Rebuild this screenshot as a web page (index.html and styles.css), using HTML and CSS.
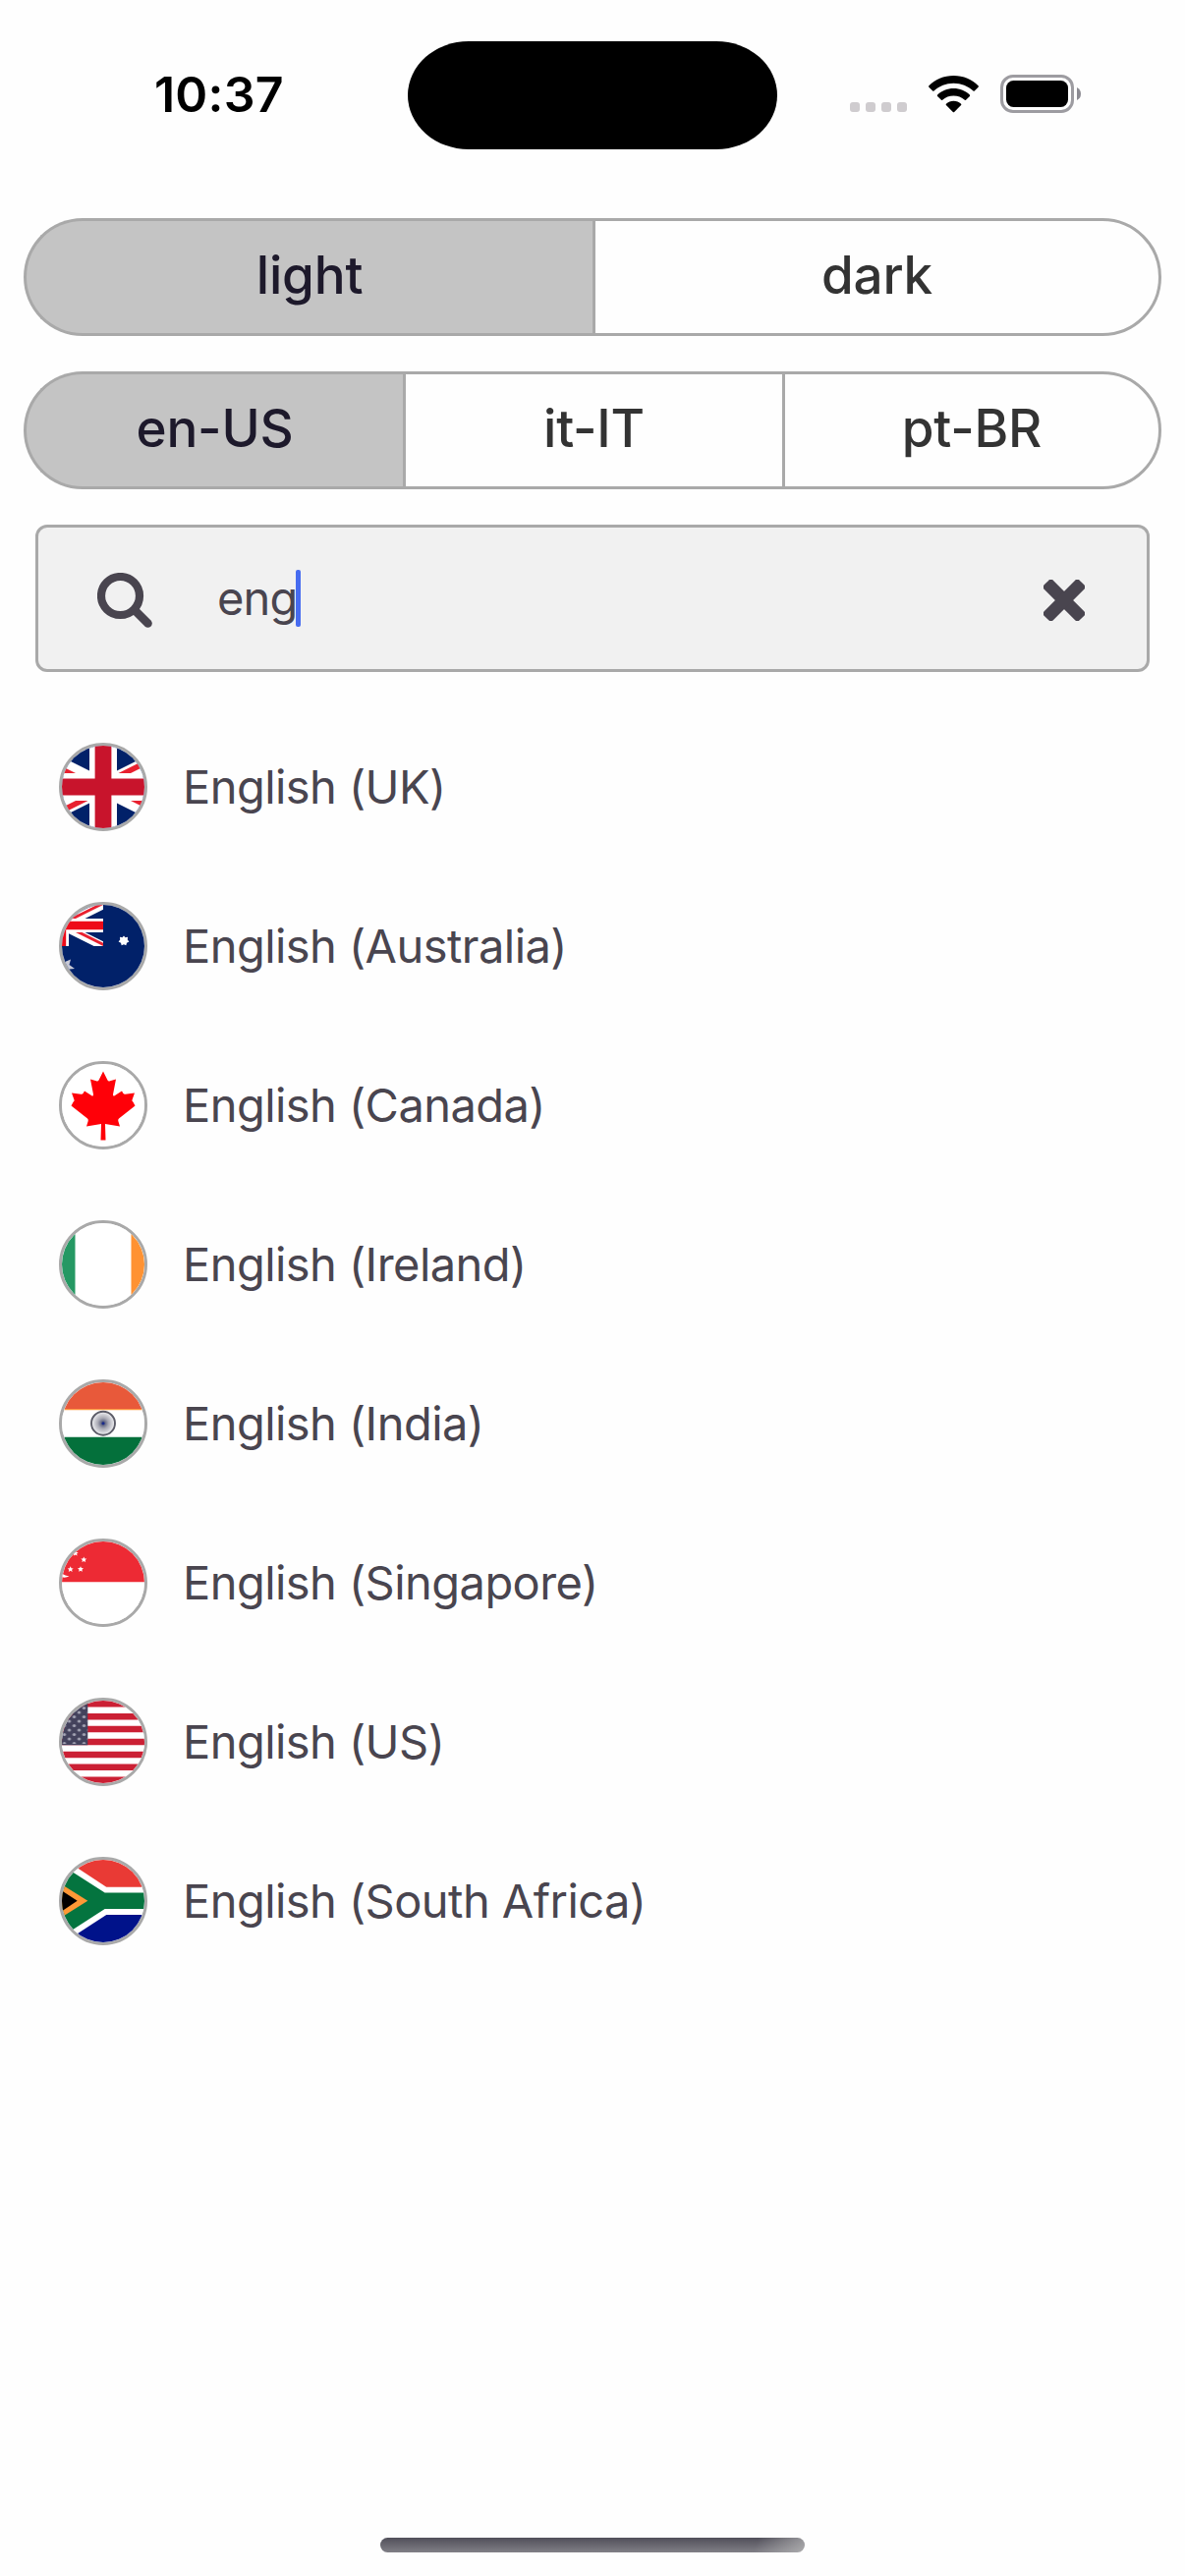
FILE: index.html
```html
<!DOCTYPE html>
<html lang="en">
<head>
<meta charset="utf-8">
<title>Language picker</title>
<link rel="stylesheet" href="styles.css">
</head>
<body>
<div class="screen">
  <header class="status-bar">
    <div class="time">10:37</div>
    <div class="island"></div>
    <div class="indicators">
      <div class="signal"><i></i><i></i><i></i><i></i></div>
      <svg class="wifi" viewBox="0 0 51 38" width="51" height="38">
        <path d="M25.5 0C35.500 0 44.500 4 50.600 10.300Q51.200 11 50.600 11.700L46.800 15.500Q46.200 16 45.500 15.500C40.200 10.500 33.200 7.700 25.500 7.700S10.800 10.500 5.500 15.500Q4.800 16 4.200 15.500L.4 11.700Q-.2 11 .4 10.300C6.500 4 15.500 0 25.500 0Z"/>
        <path d="M25.500 13C31.900 13 37.700 15.500 41.900 19.500Q42.500 20.200 41.900 20.900L38 24.800Q37.400 25.300 36.800 24.800C33.800 22.100 29.900 20.600 25.500 20.600S17.200 22.100 14.200 24.800Q13.600 25.300 13 24.800L9.100 20.900Q8.500 20.200 9.100 19.500C13.300 15.500 19.100 13 25.500 13Z"/>
        <path d="M25.500 25.800C28.400 25.800 31.100 26.900 33.100 28.700Q33.600 29.400 33.100 30L26.200 37Q25.500 37.700 24.800 37L17.900 30Q17.400 29.400 17.900 28.700C19.900 26.900 22.600 25.800 25.500 25.800Z"/>
      </svg>
      <svg class="battery" viewBox="0 0 82 39" width="82" height="39">
        <rect x="1.500" y="1.500" width="72" height="36" rx="11.500" fill="none" stroke="#9d9ca1" stroke-width="3"/>
        <rect x="6" y="6" width="63" height="27" rx="7.500"/>
        <path d="M78 13Q82 15 82 19.500T78 26Z" fill="#8c8b92"/>
      </svg>
    </div>
  </header>

  <main class="content">
    <div class="segmented">
      <button class="segment active">light</button>
      <button class="segment">dark</button>
    </div>
    <div class="segmented">
      <button class="segment active">en-US</button>
      <button class="segment">it-IT</button>
      <button class="segment">pt-BR</button>
    </div>

    <div class="search">
      <svg class="search-icon" viewBox="0 0 56 56" width="56" height="56" fill="none" stroke="#49454f">
        <circle cx="23.500" cy="23.500" r="19.500" stroke-width="8.200"/>
        <path d="M38.500 38.500L51.500 51.500" stroke-width="8.600" stroke-linecap="round"/>
      </svg>
      <div class="query"><span>eng</span><i class="caret"></i></div>
      <svg class="clear-icon" viewBox="0 0 42 42" width="42" height="42" fill="#49454f">
        <rect x="-4.500" y="14.500" width="51" height="13" rx="3.200" transform="rotate(45 21 21)"/>
        <rect x="-4.500" y="14.500" width="51" height="13" rx="3.200" transform="rotate(-45 21 21)"/>
      </svg>
    </div>

    <ul class="languages">
      <li><span class="flag"><svg viewBox="3 3 84 84">
        <defs>
          <clipPath id="uj-box"><path d="M0 0H60V30H0Z"/></clipPath>
          <clipPath id="uj-diag"><path d="M30 15H60V30ZV30H0ZH0V0ZV0H60Z"/></clipPath>
          <g id="jack-diagonals" clip-path="url(#uj-box)">
            <path d="M0 0L60 30M60 0L0 30" stroke="#fff" stroke-width="6"/>
            <path d="M0 0L60 30M60 0L0 30" stroke="#e8202f" stroke-width="4" clip-path="url(#uj-diag)"/>
            <path d="M30 0V30M0 15H60" stroke="#fff" stroke-width="10"/>
          </g>
        </defs>
        <path fill="#012169" d="M0 0H90V90H0Z"/>
        <g transform="translate(-39 3) scale(2.8)">
          <use href="#jack-diagonals"/>
          <path d="M30 0V30M0 15H60" stroke="#c8142c" stroke-width="6"/>
        </g></svg></span><span class="name">English (UK)</span></li>

      <li><span class="flag"><svg viewBox="3 3 84 84">
        <path fill="#012169" d="M0 0H90V90H0Z"/>
        <g transform="translate(-39 3) scale(1.4)">
          <use href="#jack-diagonals"/>
          <path d="M30 0V30M0 15H60" stroke="#ee0a18" stroke-width="6"/>
        </g>
        <path fill="#fff" d="M66 34.500l1.500 1.800 2.500-.6-.2 2.800 1.600 2-2.400 1.200-.7 2.600-2.300-1-2.300 1-.7-2.600-2.400-1.200 1.600-2-.2-2.800 2.500.6z"/>
        <path fill="#c9cad6" d="M3 54L6 61 12 58.500 10.500 64 16 68 10.500 68.500 12 74 6 72 3 78Z"/>
      </svg></span><span class="name">English (Australia)</span></li>

      <li><span class="flag"><svg viewBox="3 3 84 84">
        <path fill="#fff" d="M0 0H90V90H0Z"/>
        <path fill="#ff0008" d="M45 10.500L49.500 19.500Q50.300 21 52 20.300L58 18.500 55 34Q55 36.500 57 35L64 30.500 65.500 33Q66 34 67.500 33.800L77 32.500 74.500 39.500Q74 41 75.500 41.800L77.500 45.500 61 58.500Q59.800 59.500 60.300 61L62 66.500 47 64 47.500 80.500H42.500L43 64 28 66.500 29.700 61Q30.200 59.500 29 58.500L12.500 45.500 14.500 41.800Q16 41 15.500 39.500L13 32.500 22.500 33.800Q24 34 24.500 33L26 30.500 33 35Q35 36.500 35 34L32 18.500 38 20.300Q39.700 21 40.500 19.500Z"/>
      </svg></span><span class="name">English (Canada)</span></li>

      <li><span class="flag"><svg viewBox="3 3 84 84">
        <path fill="#fff" d="M0 0H90V90H0Z"/>
        <path fill="#259863" d="M0 0H16.500V90H0Z"/>
        <path fill="#ff9232" d="M73.500 0H90V90H73.500Z"/>
      </svg></span><span class="name">English (Ireland)</span></li>

      <li><span class="flag"><svg viewBox="3 3 84 84">
        <defs><radialGradient id="chakra"><stop offset="0" stop-color="#3d4468"/><stop offset=".45" stop-color="#a9a9b4"/><stop offset="1" stop-color="#f4f4f6"/></radialGradient></defs>
        <path fill="#fff" d="M0 0H90V90H0Z"/>
        <path fill="#e8593a" d="M0 0H90V30H0Z"/>
        <path fill="#ff9840" d="M0 30H90V31.200H0Z"/>
        <path fill="#04703b" d="M0 58.700H90V90H0Z"/>
        <circle cx="45" cy="44.700" r="12" fill="url(#chakra)" stroke="#5c5c68" stroke-width="1.900"/>
        <circle cx="45" cy="44.700" r="1.500" fill="#1a2a8c"/>
      </svg></span><span class="name">English (India)</span></li>

      <li><span class="flag"><svg viewBox="3 3 84 84">
        <defs><path id="star" fill="#fff" d="M0-3L.9-1.100 3-.9 1.400.5 1.900 2.600 0 1.500-1.900 2.600-1.400.5-3-.9-.9-1.100Z"/></defs>
        <path fill="#fff" d="M0 0H90V90H0Z"/>
        <path fill="#ed2a34" d="M0 0H90V44.300H0Z"/>
        <use href="#star" x="16.700" y="15"/><use href="#star" x="25.300" y="21.500"/>
        <use href="#star" x="11.700" y="31.300"/><use href="#star" x="22" y="31.200"/>
        <path fill="#fff" d="M2 35Q6 37.800 10.500 38.600Q6 40.500 2 39Z"/>
      </svg></span><span class="name">English (Singapore)</span></li>

      <li><span class="flag"><svg viewBox="3 3 84 84">
        <defs><pattern id="stars" x="2.500" y="8" width="10" height="9" patternUnits="userSpaceOnUse"><circle cx="3" cy="2.500" r="1.600" fill="#a9a9b8"/><circle cx="8" cy="7" r="1.600" fill="#a9a9b8"/></pattern></defs>
        <path fill="#fff" d="M0 0H90V90H0Z"/>
        <path stroke="#cb2034" stroke-width="6.460" d="M0 6.230H90M0 19.150H90M0 32.080H90M0 45H90M0 57.920H90M0 70.850H90M0 83.770H90"/>
        <path fill="#44425c" d="M0 0H29.300V48.200H0Z"/>
        <path fill="url(#stars)" d="M0 8H29.300V47H0Z"/>
      </svg></span><span class="name">English (US)</span></li>

      <li><span class="flag"><svg viewBox="3 3 84 84">
        <path fill="#fff" d="M0 0H90V90H0Z"/>
        <path fill="#e93a35" d="M1.600 0H90V30.700H48.300Z"/>
        <path fill="#00128a" d="M1.600 89.400V90H90V58.900H48.300Z"/>
        <path fill="#04743f" d="M0 6.500L46.700 36.500H90V53.100H46.700L0 83.100Z"/>
        <path fill="#ff9836" d="M0 26.500L29.300 44.800 0 63.100Z"/>
        <path d="M0 32.500L18.700 44.800 0 57.100Z"/>
      </svg></span><span class="name">English (South Africa)</span></li>
    </ul>
  </main>

  <div class="home-indicator"></div>
</div>
</body>
</html>
```
FILE: styles.css
```css
* { box-sizing: border-box; }

body {
  margin: 0;
  background: #fefefe;
  font-family: Inter, "Liberation Sans", sans-serif;
  color: #49454f;
}

.screen {
  display: flex;
  flex-direction: column;
  width: 1206px;
  height: 2622px;
  overflow: hidden;
}

.status-bar {
  display: grid;
  grid-template-columns: 415px 376px 1fr;
  height: 222px;
  padding-top: 42px;
  align-items: start;
}

.time {
  padding: 0 0 0 157px;
  font-size: 50px;
  font-weight: 600;
  line-height: 108px;
  letter-spacing: 0.2px;
  color: #000;
}

.island {
  height: 110px;
  border-radius: 62px / 55px;
  background: #000;
}

.indicators {
  display: flex;
  align-items: flex-start;
  padding: 34px 0 0 74px;
}

.signal {
  display: flex;
  gap: 6px;
  margin: 28px 22px 0 0;
}

.signal i {
  width: 10px;
  height: 10px;
  border-radius: 3px;
  background: #cfcccf;
}

.wifi { margin: 1px 22px 0 0; }

.content {
  display: flex;
  flex: 1;
  flex-direction: column;
  gap: 36px;
  padding: 0 24px;
}

.segmented {
  display: grid;
  grid-auto-flow: column;
  grid-auto-columns: 1fr;
  height: 120px;
}

.segment {
  padding: 0 0 4px;
  border: 3px solid #a9a9a9;
  border-right-width: 0;
  background: transparent;
  font: 500 53px/1 Inter, "Liberation Sans", sans-serif;
  letter-spacing: -0.2px;
  color: #333;
}

.segment:first-child { border-radius: 60px 0 0 60px; }

.segment:last-child {
  border-right-width: 3px;
  border-radius: 0 60px 60px 0;
}

.segment.active {
  background: #c4c4c4;
  color: #1d192b;
}

.search {
  display: flex;
  align-items: center;
  height: 150px;
  margin: 0 12px;
  padding: 3px 63px 0 60px;
  border: 3px solid #a9a9a9;
  border-radius: 12px;
  background: #f1f1f1;
}

.query {
  display: flex;
  flex: 1;
  align-items: center;
  padding: 0 0 4px 66px;
  font-size: 47px;
  line-height: 58px;
  letter-spacing: -0.8px;
}

.caret {
  width: 5px;
  height: 58px;
  margin: 0 0 0 -2px;
  border-radius: 2px;
  background: #476cf0;
}

.languages {
  display: flex;
  flex-direction: column;
  gap: 72px;
  margin: 36px 0 0;
  padding: 0 36px;
  list-style: none;
}

.languages li {
  display: flex;
  align-items: center;
  gap: 36px;
  height: 90px;
}

.name {
  padding-bottom: 1px;
  font-size: 47px;
  letter-spacing: -0.55px;
}

.flag {
  width: 90px;
  height: 90px;
  border: 3px solid #a9a9a9;
  border-radius: 50%;
  overflow: hidden;
}

.flag svg {
  display: block;
  width: 84px;
  height: 84px;
}

.home-indicator {
  width: 432px;
  height: 15px;
  margin: 0 auto 24px;
  border-radius: 8px;
  background:
    linear-gradient(110deg, transparent 88%, rgba(190, 190, 190, 0.7) 100%),
    linear-gradient(#514f5a, #807f86);
}
```
